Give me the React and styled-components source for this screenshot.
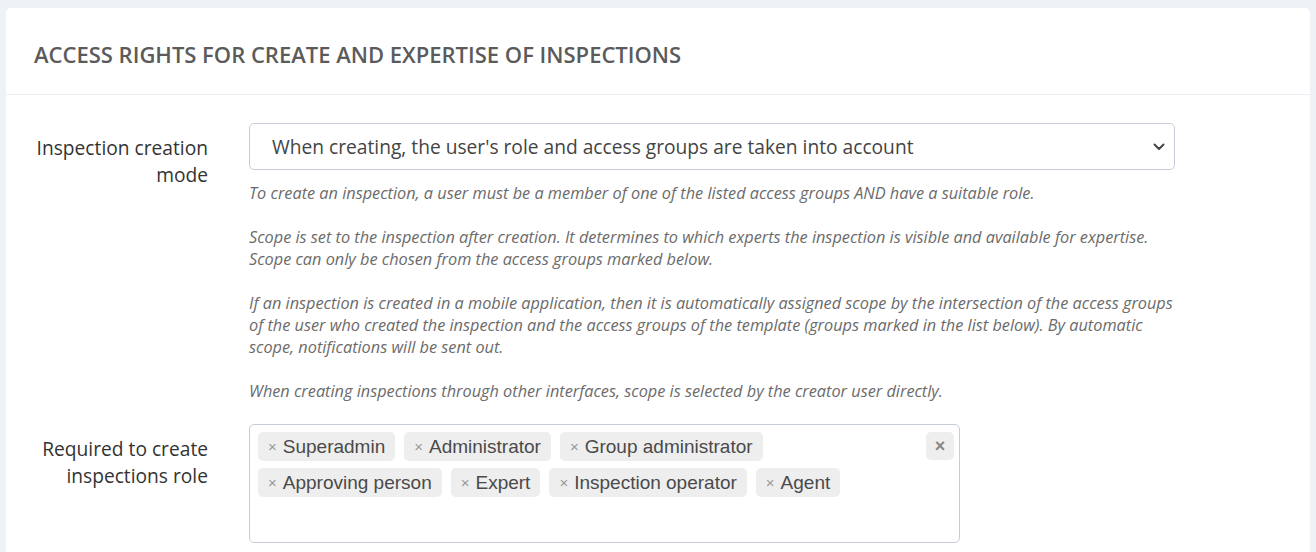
import React from "react";
import styled, { createGlobalStyle } from "styled-components";

const HELP = [
  "To create an inspection, a user must be a member of one of the listed access groups AND have a suitable role.",
  "Scope is set to the inspection after creation. It determines to which experts the inspection is visible and available for expertise. Scope can only be chosen from the access groups marked below.",
  "If an inspection is created in a mobile application, then it is automatically assigned scope by the intersection of the access groups of the user who created the inspection and the access groups of the template (groups marked in the list below). By automatic scope, notifications will be sent out.",
  "When creating inspections through other interfaces, scope is selected by the creator user directly.",
];

const ROLES = [
  "Superadmin",
  "Administrator",
  "Group administrator",
  "Approving person",
  "Expert",
  "Inspection operator",
  "Agent",
];

const App = () => {
  return (
    <>
      <GlobalStyle />
      <Page>
        <Card>
          <CardHeader>
            <Title>Access rights for create and expertise of inspections</Title>
          </CardHeader>
          <CardBody>
            <FormRow>
              <Label>Inspection creation mode</Label>
              <Field>
                <Select>
                  <span>When creating, the user's role and access groups are taken into account</span>
                  <svg width="12" height="8" viewBox="0 0 12 8">
                    <polyline
                      points="1.5,1.5 6,6 10.5,1.5"
                      fill="none"
                      stroke="#444"
                      strokeWidth="2"
                      strokeLinecap="round"
                      strokeLinejoin="round"
                    />
                  </svg>
                </Select>
                <Help>
                  {HELP.map((p, i) => (
                    <p key={i}>{p}</p>
                  ))}
                </Help>
              </Field>
            </FormRow>
            <FormRow>
              <Label $top={11}>Required to create inspections role</Label>
              <Field>
                <MultiSelect>
                  <Tags>
                    {ROLES.map((r) => (
                      <Tag key={r}>
                        <TagRemove>×</TagRemove>
                        {r}
                      </Tag>
                    ))}
                  </Tags>
                  <ClearAll>×</ClearAll>
                </MultiSelect>
              </Field>
            </FormRow>
          </CardBody>
        </Card>
      </Page>
    </>
  );
};

export default App;

const GlobalStyle = createGlobalStyle`
  * { box-sizing: border-box; }
  body {
    margin: 0;
    background: #eef1f6;
    font-family: "Open Sans", "Liberation Sans", sans-serif;
  }
`;

const Page = styled.div`
  padding: 8px 6px 0 6px;
  height: 552px;
  overflow: hidden;
`;

const Card = styled.div`
  background: #fff;
  border-radius: 5px;
  min-height: 600px;
`;

const CardHeader = styled.div`
  height: 87px;
  display: flex;
  align-items: center;
  padding: 5px 28px 0 28px;
  border-bottom: 1px solid #e9ecf1;
`;

const Title = styled.h2`
  margin: 0;
  font-size: 22px;
  font-weight: 600;
  color: #5b5b5b;
  text-transform: uppercase;
`;

const CardBody = styled.div`
  padding: 28px 0 0 0;
  display: flex;
  flex-direction: column;
  gap: 22px;
`;

const FormRow = styled.div`
  display: grid;
  grid-template-columns: 202px 926px;
  column-gap: 41px;
`;

const Label = styled.div`
  padding-top: ${({ $top }) => $top ?? 11}px;
  text-align: right;
  font-size: 19.2px;
  line-height: 27px;
  color: #333;
`;

const Field = styled.div`
  display: flex;
  flex-direction: column;
`;

const Select = styled.div`
  height: 47px;
  border: 1px solid #c7cdd8;
  border-radius: 5px;
  display: flex;
  align-items: center;
  justify-content: space-between;
  padding: 0 9px 0 22px;
  font-size: 19.2px;
  color: #444;

  svg {
    margin-top: 1px;
  }
`;

const Help = styled.div`
  margin-top: 12px;
  font-size: 16.3px;
  line-height: 22px;
  font-style: italic;
  color: #6b6b6b;

  p {
    margin: 0 0 22px 0;
  }
  p:last-child {
    margin-bottom: 0;
  }
`;

const MultiSelect = styled.div`
  width: 711px;
  height: 119px;
  border: 1px solid #c7cdd8;
  border-radius: 5px;
  padding: 7px 5px 0 8px;
  display: flex;
  align-items: flex-start;
  justify-content: space-between;
`;

const Tags = styled.div`
  display: flex;
  flex-wrap: wrap;
  gap: 7px 9px;
  max-width: 640px;
`;

const Tag = styled.span`
  display: inline-flex;
  align-items: center;
  height: 29px;
  padding: 0 10px;
  background: #eeeeee;
  border-radius: 5px;
  font-family: "Liberation Sans", Arial, sans-serif;
  font-size: 19px;
  color: #4a4a4a;
`;

const TagRemove = styled.span`
  color: #999;
  font-size: 15px;
  margin-right: 6px;
`;

const ClearAll = styled.span`
  width: 28px;
  height: 28px;
  border-radius: 5px;
  background: #eeeeee;
  display: flex;
  align-items: center;
  justify-content: center;
  font-family: "Liberation Sans", Arial, sans-serif;
  font-weight: 700;
  font-size: 18px;
  color: #888;
`;
